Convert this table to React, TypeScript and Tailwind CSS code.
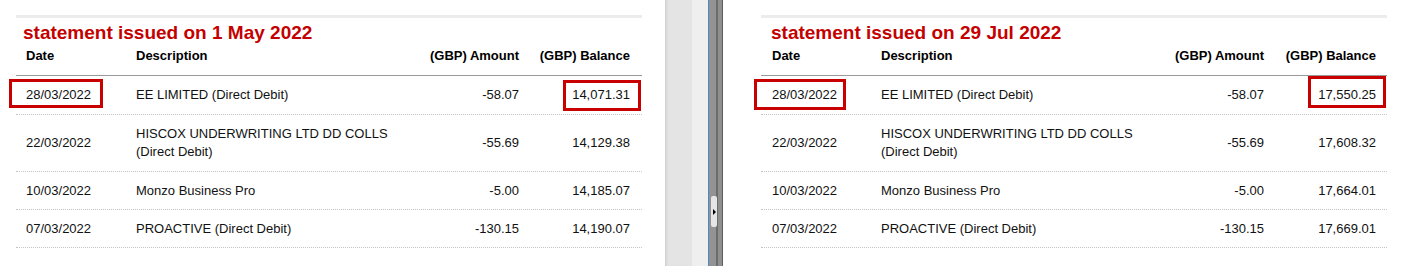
import React from "react";

type Row = { date: string; desc: string[]; amount: string; balance: string };

const rowsMay: Row[] = [
  { date: "28/03/2022", desc: ["EE LIMITED (Direct Debit)"], amount: "-58.07", balance: "14,071.31" },
  { date: "22/03/2022", desc: ["HISCOX UNDERWRITING LTD DD COLLS", "(Direct Debit)"], amount: "-55.69", balance: "14,129.38" },
  { date: "10/03/2022", desc: ["Monzo Business Pro"], amount: "-5.00", balance: "14,185.07" },
  { date: "07/03/2022", desc: ["PROACTIVE (Direct Debit)"], amount: "-130.15", balance: "14,190.07" },
];

const rowsJul: Row[] = [
  { date: "28/03/2022", desc: ["EE LIMITED (Direct Debit)"], amount: "-58.07", balance: "17,550.25" },
  { date: "22/03/2022", desc: ["HISCOX UNDERWRITING LTD DD COLLS", "(Direct Debit)"], amount: "-55.69", balance: "17,608.32" },
  { date: "10/03/2022", desc: ["Monzo Business Pro"], amount: "-5.00", balance: "17,664.01" },
  { date: "07/03/2022", desc: ["PROACTIVE (Direct Debit)"], amount: "-130.15", balance: "17,669.01" },
];

// one statement table, the first row's date and balance are boxed in red
function Statement({ title, rows, right }: { title: string; rows: Row[]; right?: boolean }) {
  return (
    <div className="w-[626px] pt-[15px] text-[13px] leading-[18px] text-[#111]">
      <div className="h-[3px] bg-[#ececec]" />
      <div className={`mt-[4px] text-[19px] leading-[21px] font-bold text-[#c40000] ${right ? "pl-[10px]" : "pl-[7px]"}`}>
        {title}
      </div>
      {/* header */}
      <div className="flex h-[33px] pt-[5px] border-b border-[#9a9a9a] font-bold text-black leading-[16px]">
        <div className={`w-[110px] ${right ? "pl-[11px]" : "pl-[10px]"}`}>Date</div>
        <div className="flex-1 pl-[10px]">Description</div>
        <div className="w-[110px] text-right pr-[10px]">(GBP) Amount</div>
        <div className={`w-[113px] text-right ${right ? "pr-[11px]" : "pr-[12px]"}`}>(GBP) Balance</div>
      </div>
      {rows.map((r, i) => (
        <div
          key={i}
          className={`relative flex items-center border-b border-dotted border-[#c4c4c4] ${
            r.desc.length > 1 ? "h-[57px]" : i === 0 ? "h-[39px]" : "h-[38px]"
          }`}
        >
          <div className={`w-[110px] ${right ? "pl-[11px]" : "pl-[10px]"}`}>{r.date}</div>
          <div className="flex-1 pl-[10px]">
            {r.desc.map((d, j) => (
              <div key={j}>{d}</div>
            ))}
          </div>
          <div className="w-[110px] text-right pr-[10px]">{r.amount}</div>
          <div className={`w-[113px] text-right ${right ? "pr-[11px]" : "pr-[12px]"}`}>{r.balance}</div>
          {i === 0 && (
            <>
              <div
                className={`absolute left-[-7px] border-[3px] border-[#c80000] ${
                  right ? "top-[3px] w-[92px] h-[31px]" : "top-[3px] w-[94px] h-[29px]"
                }`}
              />
              <div
                className={`absolute right-[1px] w-[78px] border-[3px] border-[#c80000] ${
                  right ? "top-[0px] h-[32px]" : "top-[4px] h-[31px]"
                }`}
              />
            </>
          )}
        </div>
      ))}
    </div>
  );
}

export default function App() {
  return (
    <div className="flex h-[266px] w-[1402px] overflow-hidden bg-white font-['Liberation_Sans',Arial,sans-serif]">
      <div className="w-[665px] h-full bg-white pl-[16px]">
        <Statement title="statement issued on 1 May 2022" rows={rowsMay} />
      </div>
      {/* split view gutter */}
      <div className="w-[27px] h-full bg-[#e4e4e4] shadow-[inset_3px_0_3px_-2px_rgba(0,0,0,0.12)]" />
      <div className="w-[16px] h-full bg-[#efefef]" />
      <div className="w-[1px] h-full bg-[#4a88c8]" />
      <div className="relative flex w-[14px] h-full bg-[#8d8d8d]">
        <div className="w-[7px] h-full bg-[#939393]" />
        <div className="w-[2px] h-full bg-[#6c6c6c]" />
        <div className="w-[4px] h-full bg-[#8f8f8f]" />
        <div className="w-[1px] h-full bg-[#5e5e5e]" />
        <div className="absolute left-[2px] top-[196px] w-[6px] h-[31px] rounded-[2px] bg-[#e6e6e6] flex items-center justify-center">
          <div className="w-0 h-0 border-y-[3px] border-y-transparent border-l-[3px] border-l-black" />
        </div>
      </div>
      <div className="flex-1 h-full bg-white pl-[38px]">
        <Statement title="statement issued on 29 Jul 2022" rows={rowsJul} right />
      </div>
    </div>
  );
}
